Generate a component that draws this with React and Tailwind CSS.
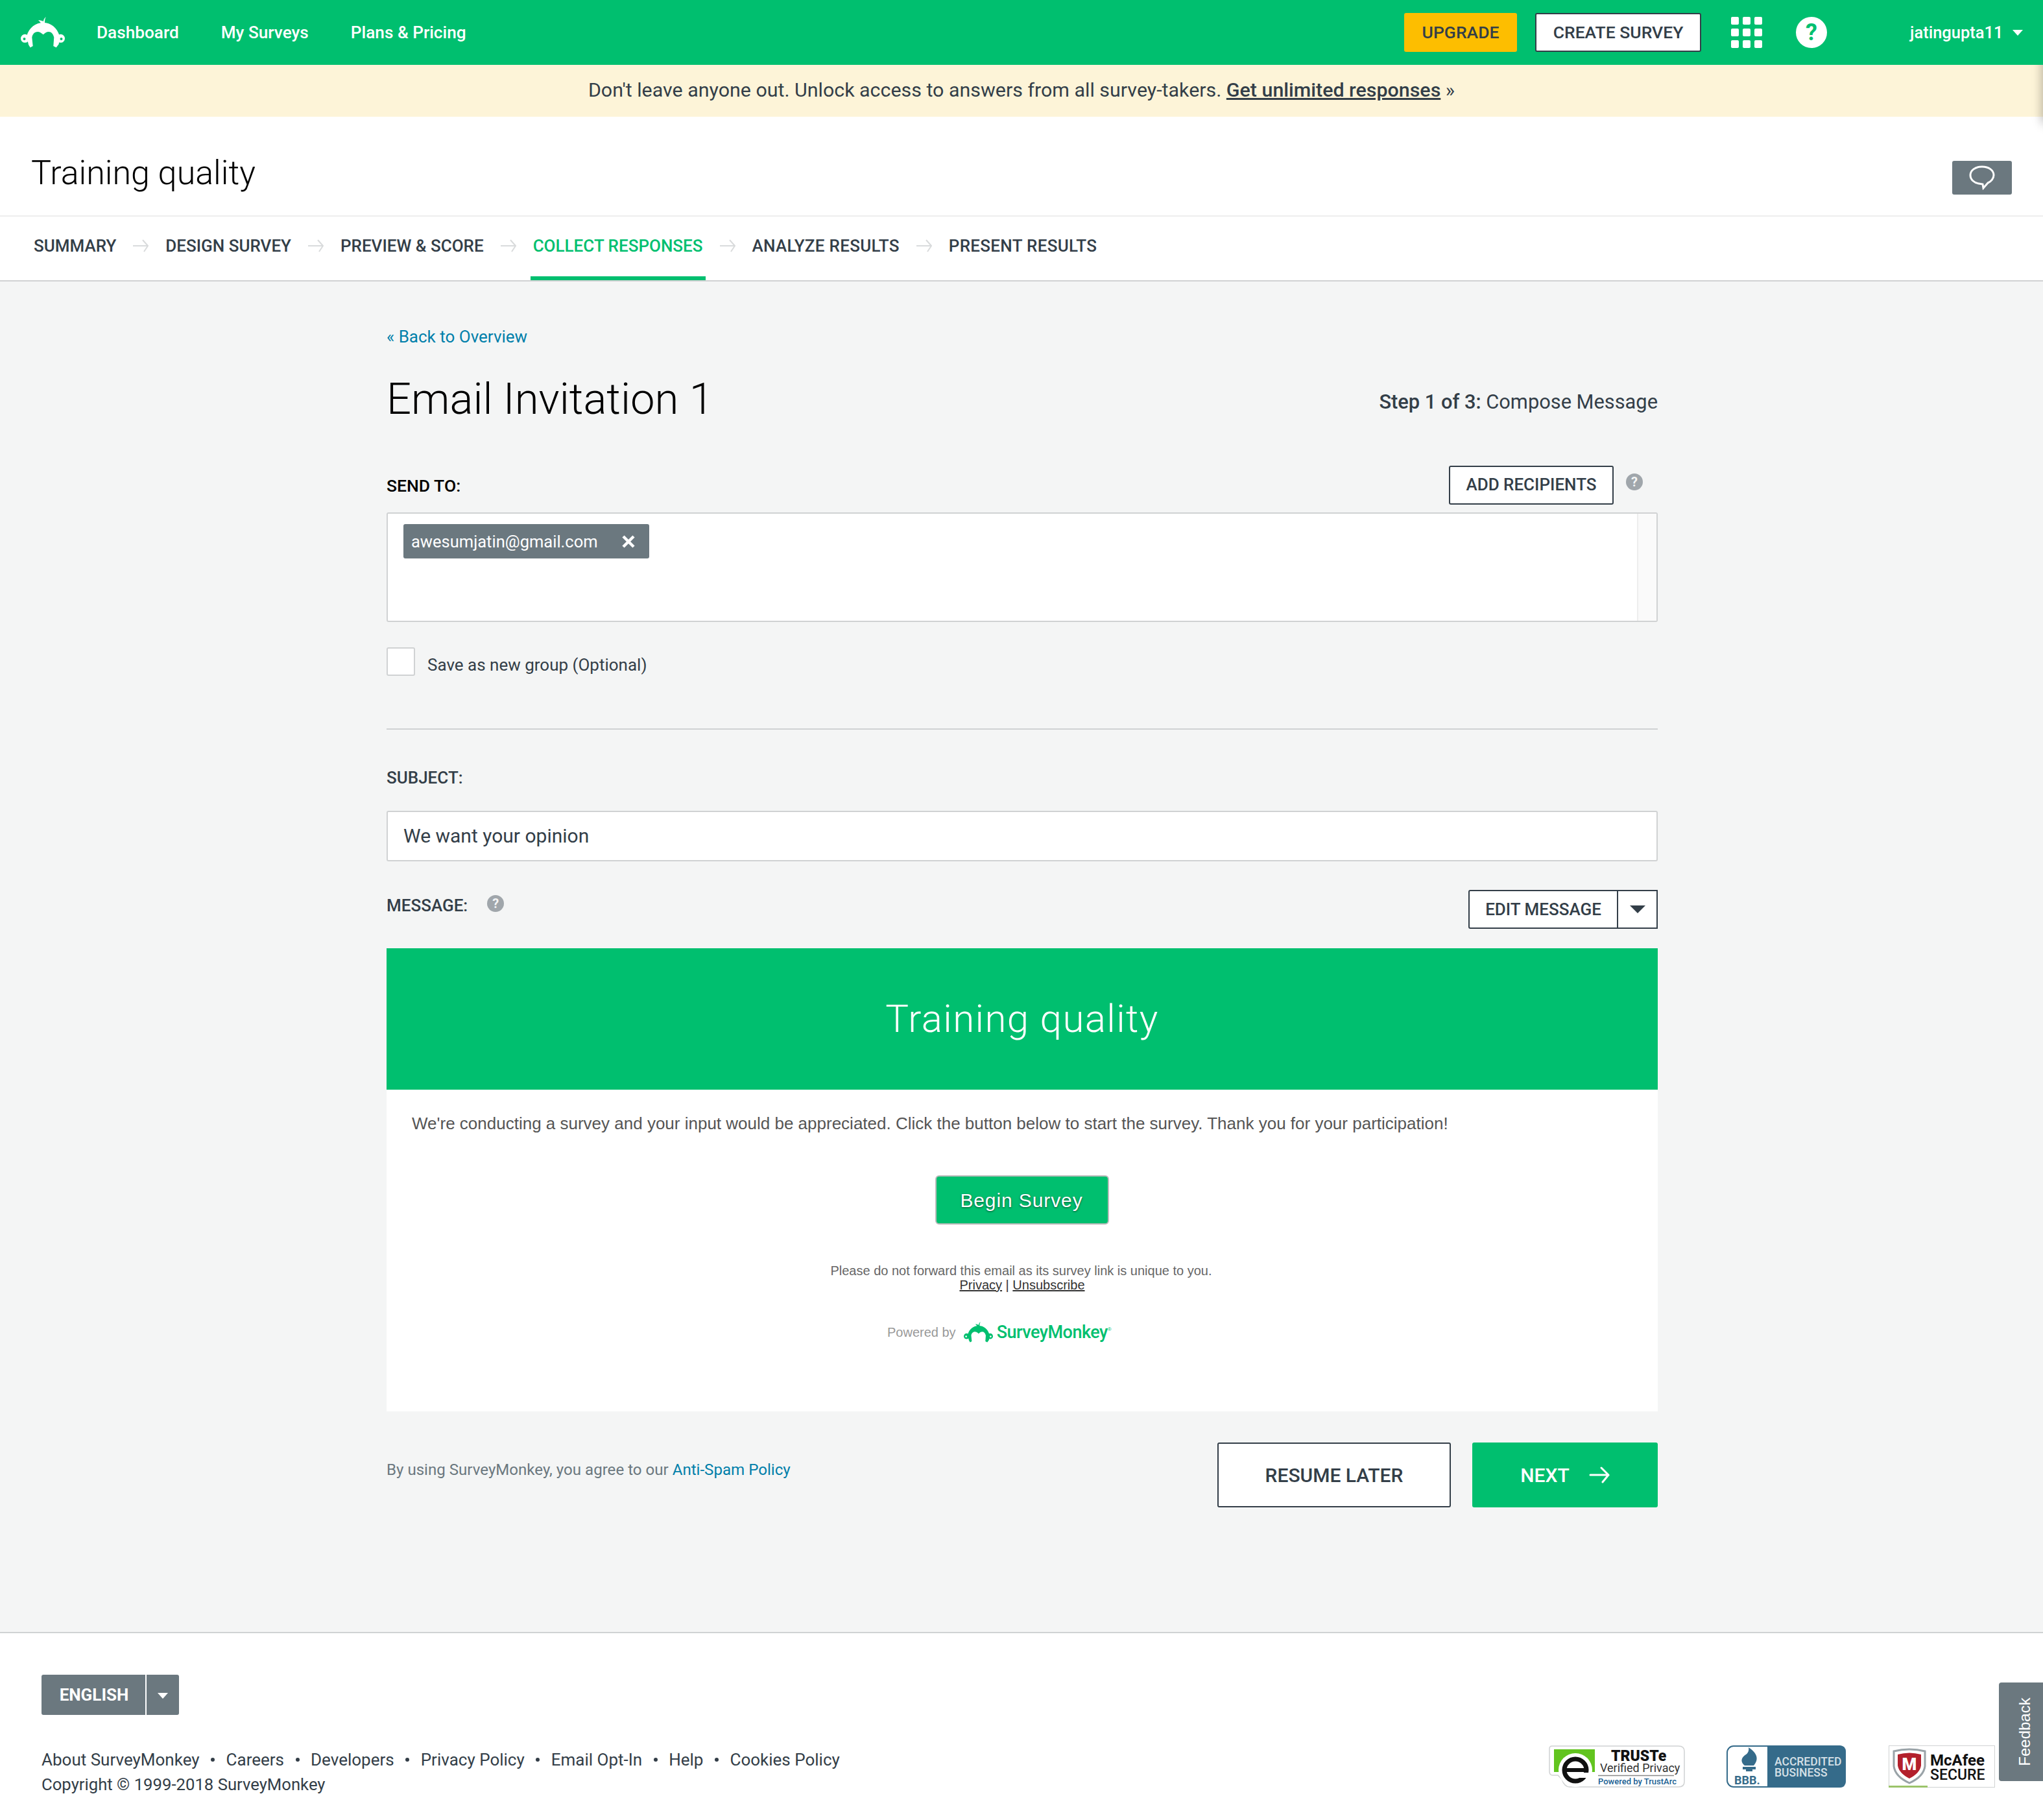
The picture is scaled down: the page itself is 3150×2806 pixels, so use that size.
const sans = "font-['Roboto',sans-serif]"

function Monkey({ className, color, hole }) {
  return (
    <svg className={className} viewBox="0 0 68 48" fill={color}>
      <path d="M39 0 C36 2 35 5 35 7 C33 6 30 5 27 5 C29 7 31 9 32 11 L37 11 C37 6 37 3 39 0 Z" />
      <path d="M34.700 9 C46 9 56 16 60 30 L58.700 42 L54.700 47.300 L50.300 45 L51.300 31.700 C50 26 47 23 43 23 C40 23 37 25 34.700 27.300 C32 25 29 23 26 23 C21 23 18 27 17.300 31.700 L18.700 45 L14.700 47.300 L12 43 L9 30 C13 16 23 9 34.700 9 Z" />
      <circle cx="6.500" cy="33.300" r="6.500" />
      <circle cx="61.500" cy="33.300" r="6.500" />
      <circle cx="5.500" cy="34" r="2" fill={hole} />
      <circle cx="62.500" cy="34" r="2" fill={hole} />
    </svg>
  )
}

function TabArrow() {
  return (
    <svg className="mx-[26px] h-[20px] w-[24px] shrink-0" viewBox="0 0 24 20" fill="none" stroke="#d9dbdc" strokeWidth="2">
      <path d="M0 10 H23 M15 1 L23 10 L17 19" />
    </svg>
  )
}

function HelpDot({ className }) {
  return (
    <span className={`flex h-[26px] w-[26px] items-center justify-center rounded-full bg-[#a0a6ab] text-[20px] font-bold leading-none text-[#f4f5f5] ${className}`}>
      ?
    </span>
  )
}

function Truste() {
  return (
    <svg className="h-[65px] w-[210px]" viewBox="0 0 210 65">
      <path d="M5 1 H200 Q209 1 209 9 V56 Q209 64 200 64 H32 Q24 64 20 52 L14 46 H6 Q1 46 1 40 V5 Q1 1 5 1 Z" fill="#fff" stroke="#d0d2d3" strokeWidth="1.5" />
      <path d="M8 6 H71 V41 H8 Z" fill="#62c41f" />
      <circle cx="41" cy="38" r="26" fill="#fff" />
      <circle cx="41" cy="38" r="17" fill="none" stroke="#111" strokeWidth="7" />
      <path d="M27 35 H55 V41 H27 Z" fill="#111" />
      <path d="M44 42 H62 V50 H44 Z" fill="#fff" />
      <text x="96" y="24" fontFamily="Roboto, sans-serif" fontWeight="900" fontSize="23" fill="#111">TRUSTe</text>
      <text x="79" y="41" fontFamily="Roboto, sans-serif" fontSize="18" fill="#333">Verified Privacy</text>
      <path d="M76 46.500 H193" stroke="#888" strokeWidth="1.500" />
      <text x="76" y="60" fontFamily="Roboto, sans-serif" fontWeight="500" fontSize="13" fill="#1b5f93">Powered by TrustArc</text>
    </svg>
  )
}

function Bbb() {
  return (
    <svg className="h-[65px] w-[184px]" viewBox="0 0 184 65">
      <rect x="1" y="1" width="182" height="63" rx="10" fill="#fff" stroke="#356b8a" strokeWidth="2" />
      <path d="M63 0 H174 Q184 0 184 10 V55 Q184 65 174 65 H63 Z" fill="#356b8a" />
      <path d="M34 3 C48 12 50 22 42 31 H28 C20 24 24 18 30 14 C33 12 35 8 34 3 Z" fill="#356b8a" />
      <path d="M25 33 H45 V37 H40 V40 H30 V37 H25 Z" fill="#356b8a" />
      <text x="12" y="60" fontFamily="Roboto, sans-serif" fontWeight="700" fontSize="18" fill="#356b8a">BBB.</text>
      <text x="74" y="31" fontFamily="Roboto, sans-serif" fontWeight="500" fontSize="17.500" fill="#d5e0e7">ACCREDITED</text>
      <text x="74" y="48" fontFamily="Roboto, sans-serif" fontWeight="500" fontSize="17.500" fill="#d5e0e7">BUSINESS</text>
    </svg>
  )
}

function Mcafee() {
  return (
    <svg className="h-[65px] w-[164px]" viewBox="0 0 164 65">
      <rect x="0.500" y="0.500" width="163" height="64" fill="#fff" stroke="#d0d2d3" />
      <path d="M0 62 H60 V65 H0 Z" fill="#9bc46a" />
      <path d="M8 9 Q32 3 56 9 V32 Q54 48 32 58 Q10 48 8 32 Z" fill="#fff" stroke="#9aa3a8" strokeWidth="3" />
      <path d="M14 14 Q32 9 50 14 V31 Q48 43 32 51 Q16 43 14 31 Z" fill="#b3202c" />
      <text x="32" y="38" textAnchor="middle" fontFamily="Roboto, sans-serif" fontWeight="900" fontSize="26" fill="#fff">M</text>
      <text x="64" y="31" fontFamily="Roboto, sans-serif" fontWeight="700" fontSize="24" fill="#111">McAfee</text>
      <text x="64" y="53" fontFamily="Roboto, sans-serif" fontWeight="500" fontSize="23" fill="#111">SECURE</text>
    </svg>
  )
}

const tabs = ["SUMMARY", "DESIGN SURVEY", "PREVIEW & SCORE", "COLLECT RESPONSES", "ANALYZE RESULTS", "PRESENT RESULTS"]
const footerLinks = ["About SurveyMonkey", "Careers", "Developers", "Privacy Policy", "Email Opt-In", "Help", "Cookies Policy"]

export default function App() {
  return (
    <div className={`relative min-h-[2806px] w-[3150px] overflow-hidden bg-white text-[#333e48] ${sans}`}>
      {/* top nav */}
      <header className="flex h-[100px] items-center bg-[#00bf6f] pl-[32px] text-white">
        <Monkey className="h-[48px] w-[68px]" color="#fff" hole="#00bf6f" />
        <nav className="ml-[49px] mt-[2px] flex gap-[65px] text-[26.200px] font-medium">
          <a>Dashboard</a>
          <a>My Surveys</a>
          <a>Plans &amp; Pricing</a>
        </nav>
        <div className="ml-auto flex h-[60px] w-[174px] items-center justify-center rounded-[3px] bg-[#fdbe00] text-[26.500px] font-medium text-[#333e48]">UPGRADE</div>
        <div className="ml-[28px] flex h-[60px] w-[256px] items-center justify-center rounded-[3px] border-2 border-[#333e48] bg-white text-[26.500px] font-medium text-[#333e48]">CREATE SURVEY</div>
        <div className="ml-[46px] grid grid-cols-3 gap-[6px]">
          {[0, 1, 2, 3, 4, 5, 6, 7, 8].map((i) => (
            <span key={i} className="h-[12px] w-[12px] rounded-[2px] bg-white" />
          ))}
        </div>
        <span className="ml-[52px] flex h-[48px] w-[48px] items-center justify-center rounded-full bg-white text-[36px] font-bold leading-none text-[#00bf6f]">?</span>
        <span className="ml-[128px] w-[142px] whitespace-nowrap text-[25.500px] font-medium">jatingupta11</span>
        <span className="ml-[16px] mr-[31px] h-0 w-0 border-x-[8.500px] border-t-[9px] border-x-transparent border-t-white" />
      </header>

      {/* upsell banner */}
      <div className="flex h-[80px] items-center justify-center bg-[#fdf4d8] pb-[3px] text-[30.400px]">
        <span>
          Don't leave anyone out. Unlock access to answers from all survey-takers.{" "}
          <a className="font-medium underline">Get unlimited responses</a> »
        </span>
      </div>

      {/* shadow at the right edge, under the header */}
      <div className="absolute right-0 top-[100px] h-[110px] w-[24px] overflow-hidden">
        <div className="absolute right-[-10px] top-[-20px] h-[110px] w-[10px] shadow-[0_0_16px_rgba(0,0,0,0.4)]" />
      </div>

      {/* survey title */}
      <div className="flex h-[154px] items-center justify-between border-b-2 border-[#eeeeee] px-[48px]">
        <h1 className="mt-[22px] text-[52px] font-light leading-none text-black">Training quality</h1>
        <button className="mt-[36px] flex h-[52px] w-[92px] items-center justify-center rounded-[3px] bg-[#6b787f]">
          <svg className="h-[38px] w-[40px]" viewBox="0 0 40 38" fill="none" stroke="#fff" strokeWidth="3">
            <path d="M20 2 C9 2 2 8 2 15 C2 22 8 27 15 28 L21 29 L22 35 L29 27 C34 25 38 20 38 15 C38 8 31 2 20 2 Z" />
          </svg>
        </button>
      </div>

      {/* step tabs */}
      <div className="flex h-[100px] items-stretch border-b-2 border-[#d0d2d3] pl-[52px] text-[26px] font-medium">
        {tabs.map((tab, i) => (
          <div key={tab} className="flex items-stretch">
            <div className={i === 3 ? "-mx-[4px] flex items-center border-b-[6px] border-[#00bf6f] px-[4px] pb-[2px] text-[#00bf6f]" : i > 3 ? "flex items-center pb-[8px] tracking-[0.3px]" : "flex items-center pb-[8px]"}>{tab}</div>
            {i < tabs.length - 1 && (
              <div className="flex items-center pb-[8px]">
                <TabArrow />
              </div>
            )}
          </div>
        ))}
      </div>

      {/* compose */}
      <main className="h-[2084px] border-b-2 border-[#d0d2d3] bg-[#f4f5f5] pt-[70px]">
        <div className="ml-[596px] w-[1960px]">
          <div className="flex h-[30px] items-center text-[26px] text-[#007faa]">
            <a>« Back to Overview</a>
          </div>
          <div className="mt-[41px] flex h-[80px] items-center justify-between">
            <h2 className="text-[67px] font-light text-black">Email Invitation 1</h2>
            <p className="mt-[11px] text-[30.800px]">
              <b className="font-medium">Step 1 of 3:</b> Compose Message
            </p>
          </div>

          <div className="mt-[63px] flex h-[59px] items-center">
            <label className="mt-[2px] text-[26.500px] font-medium text-black">SEND TO:</label>
            <button className="ml-auto flex h-[60px] w-[254px] items-center justify-center rounded-[3px] border-2 border-[#333e48] bg-white text-[26px] font-medium">ADD RECIPIENTS</button>
            <HelpDot className="ml-[19px] mr-[23px] mt-[-10px]" />
          </div>

          <div className="mt-[13px] flex h-[169px] rounded-[3px] border-2 border-[#d0d2d3] bg-white">
            <div className="flex-1 pl-[24px] pt-[16px]">
              <div className="flex h-[53px] w-[379px] items-center justify-between rounded-[3px] bg-[#6b787f] pl-[12px] pr-[22px] text-[25.500px] text-white">
                <span className="mt-[2px]">awesumjatin@gmail.com</span>
                <svg className="h-[20px] w-[20px]" viewBox="0 0 20 20" stroke="#fff" strokeWidth="4.500">
                  <path d="M2 2 L18 18 M18 2 L2 18" />
                </svg>
              </div>
            </div>
            <div className="w-[30px] border-l-2 border-[#eeeeee] bg-[#fafafa]" />
          </div>

          <div className="mt-[39px] flex h-[44px] items-center">
            <span className="h-[44px] w-[44px] rounded-[3px] border-2 border-[#d0d2d3] bg-white" />
            <span className="ml-[19px] mt-[10px] text-[26px]">Save as new group (Optional)</span>
          </div>

          <div className="mt-[81px] h-[2px] bg-[#d0d2d3]" />

          <label className="mt-[59px] block h-[30px] text-[26px] font-medium leading-[30px]">SUBJECT:</label>

          <div className="mt-[36px] flex h-[78px] items-center rounded-[3px] border-2 border-[#d0d2d3] bg-white pb-[2px] pl-[24px] text-[30px]">We want your opinion</div>

          <div className="mt-[44px] flex h-[60px] items-start">
            <label className="mt-[5px] text-[26px] font-medium">MESSAGE:</label>
            <HelpDot className="ml-[30px] mt-[8px]" />
            <div className="ml-auto flex h-[60px] w-[292px] rounded-l-[3px] border-2 border-[#333e48] bg-white">
              <span className="flex w-[229px] items-center justify-center border-r-2 border-[#333e48] text-[26px] font-medium">EDIT MESSAGE</span>
              <span className="flex flex-1 items-center justify-center">
                <span className="h-0 w-0 border-x-[12px] border-t-[12px] border-x-transparent border-t-[#333e48]" />
              </span>
            </div>
          </div>

          {/* email preview */}
          <div className="mt-[30px] bg-white font-['Liberation_Sans',Arial,sans-serif]">
            <div className="flex h-[218px] items-center justify-center bg-[#00bf6f] text-[60px] tracking-[1.400px] text-white">
              <span className={`font-light ${sans}`}>Training quality</span>
            </div>
            <div className="h-[496px] pl-[39px] pt-[34px] text-[#555]">
              <p className="text-[26px] leading-[36px]">We're conducting a survey and your input would be appreciated. Click the button below to start the survey. Thank you for your participation!</p>
              <div className="ml-[-39px] flex flex-col items-center">
                <a className="mt-[62px] flex h-[76px] w-[268px] items-center justify-center rounded-[6px] border-2 border-[#bbbbbb] bg-[#00bf6f] pr-[2px] text-[30px] tracking-[0.900px] text-white [text-shadow:0_1px_3px_rgba(0,0,0,0.6)]">Begin Survey</a>
                <p className="mr-[3px] mt-[60px] text-[20px] leading-[22px] text-[#666]">Please do not forward this email as its survey link is unique to you.</p>
                <p className="text-[20px] leading-[22px] text-[#333]">
                  <u>Privacy</u> | <u>Unsubscribe</u>
                </p>
                <div className="ml-[772px] mt-[42px] flex items-center self-start">
                  <span className="text-[20px] text-[#999]">Powered by</span>
                  <Monkey className="ml-[12px] h-[32px] w-[45px]" color="#00bf6f" hole="#fff" />
                  <span className={`ml-[6px] text-[27px] font-medium tracking-[-0.5px] text-[#00bf6f] ${sans}`}>SurveyMonkey</span>
                  <span className="mb-[8px] text-[8px] text-[#00bf6f]">®</span>
                </div>
              </div>
            </div>
          </div>

          <div className="mt-[48px] flex h-[100px] items-start">
            <p className="mt-[24px] text-[24.100px] text-[#6b787f]">
              By using SurveyMonkey, you agree to our <a className="text-[#007faa]">Anti-Spam Policy</a>
            </p>
            <button className="ml-auto flex h-[100px] w-[360px] items-center justify-center rounded-[3px] border-2 border-[#333e48] bg-white text-[30px] font-medium">RESUME LATER</button>
            <button className="ml-[33px] flex h-[100px] w-[286px] items-center justify-center rounded-[3px] bg-[#00bf6f] text-[30px] font-medium text-white">
              NEXT
              <svg className="ml-[30px] h-[26px] w-[32px]" viewBox="0 0 32 26" fill="none" stroke="#fff" strokeWidth="3" strokeLinecap="round">
                <path d="M2 13 H30 M19 2 L30 13 L21 24" />
              </svg>
            </button>
          </div>
        </div>
      </main>

      {/* footer */}
      <footer className="relative px-[64px]">
        <div className="pt-[64px]">
          <div className="flex h-[62px] w-[212px] rounded-[3px] bg-[#6b787f] text-white">
            <span className="flex w-[162px] items-center justify-center border-r-2 border-white pl-[2px] text-[26px] font-bold">ENGLISH</span>
            <span className="flex flex-1 items-center justify-center">
              <span className="mt-[3px] h-0 w-0 border-x-[8px] border-t-[9px] border-x-transparent border-t-white" />
            </span>
          </div>
        </div>
        <div className="mt-[50px] flex items-start justify-between">
          <div className="text-[26px] leading-[38px]">
            <div className="flex items-center">
              {footerLinks.map((link, i) => (
                <span key={link} className="flex items-center">
                  {i > 0 && <span className="mx-[17.500px] h-[6px] w-[6px] rounded-full bg-[#333e48]" />}
                  <a>{link}</a>
                </span>
              ))}
            </div>
            <div className="text-[25.700px]">Copyright © 1999-2018 SurveyMonkey</div>
          </div>
          <div className="mr-[10px] mt-[-3px] flex gap-[64px]">
            <Truste />
            <Bbb />
            <div className="ml-[2px]">
              <Mcafee />
            </div>
          </div>
        </div>
      </footer>

      {/* feedback tab */}
      <div className="absolute right-0 top-[2594px] flex h-[152px] w-[68px] items-center justify-center rounded-l-[4px] bg-[#6b787f] pl-[12px]">
        <span className="-rotate-90 whitespace-nowrap font-['Liberation_Sans',sans-serif] text-[24px] text-white">Feedback</span>
      </div>
    </div>
  )
}
